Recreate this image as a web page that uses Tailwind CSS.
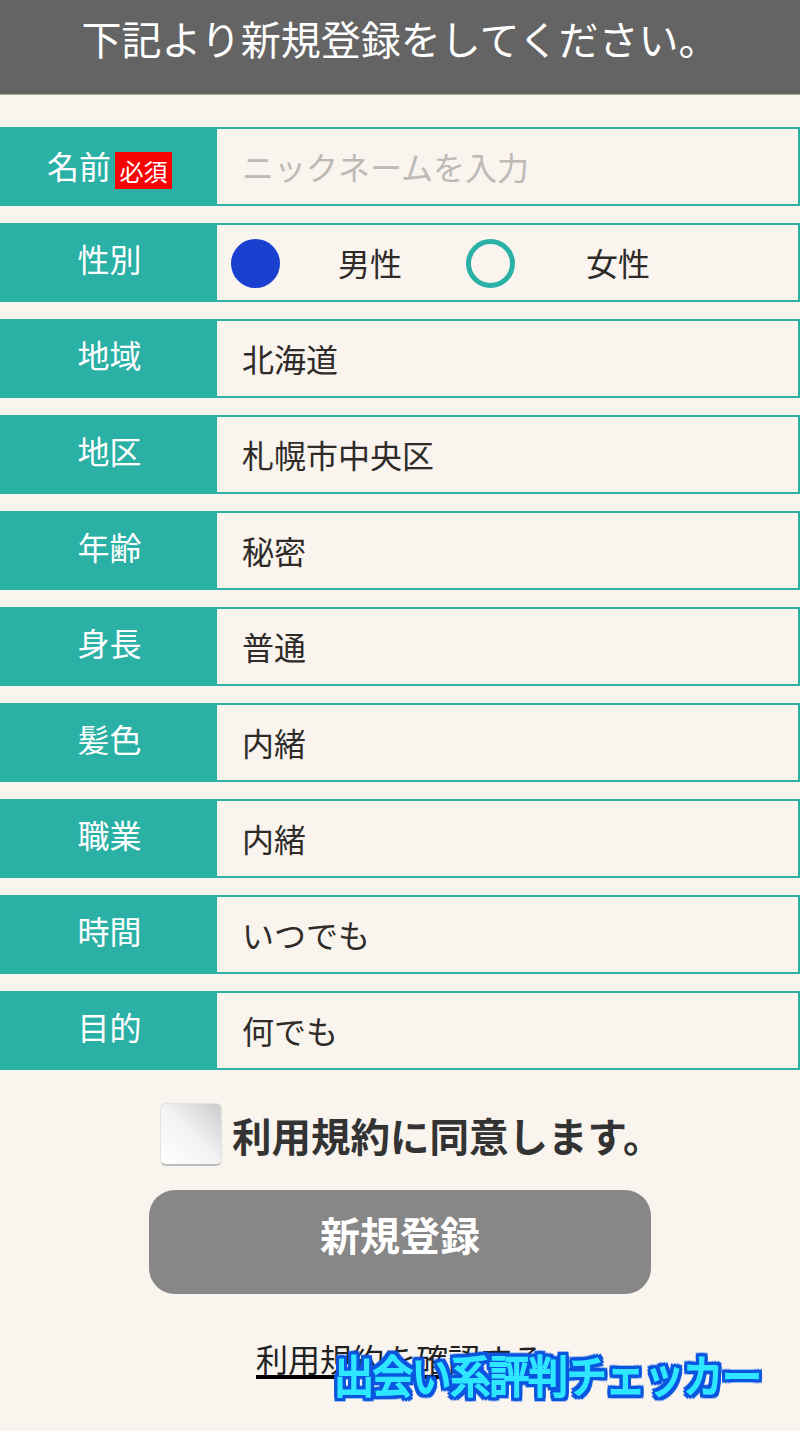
<!DOCTYPE html>
<html lang="ja"><head><meta charset="utf-8"><script src="https://cdn.jsdelivr.net/npm/@tailwindcss/browser@4"></script></head>
<body class="bg-[#f9f4ee] text-[#333]">
<div class="relative w-[800px] h-[1431px] overflow-hidden [font-family:'Noto_Sans_CJK_JP',sans-serif]">
<header class="h-[95px] bg-[#646464] border-b border-[#a9a598] text-white text-[40px] leading-[76px] text-center font-normal">下記より新規登録をしてください。</header>
<form class="mt-[32px] flex flex-col gap-[17px]">
<div class="flex h-[79px]"><div class="w-[217px] bg-[#2bb0a6] text-white text-[32px] flex items-center justify-center pb-[4px] pl-[2px]"><span class="leading-none font-normal">名前</span><span class="ml-[4px] mt-[11px] w-[57px] h-[37px] bg-[#f70303] text-[24px] leading-[37px] text-center font-normal">必須</span></div><div class="flex-1 border-2 border-l-0 border-[#2bb0a6] flex items-center pl-[25px] pb-[2px] text-[32px] text-[#bdbab6] font-normal">ニックネームを入力</div></div>
<div class="flex h-[79px]"><div class="w-[217px] bg-[#2bb0a6] text-white text-[32px] font-normal flex items-center justify-center pb-[10px] pl-[2px]">性別</div><div class="flex-1 border-2 border-l-0 border-[#2bb0a6] flex items-center pl-[14px] text-[32px] font-normal text-[#2f2b28]"><span class="w-[49px] h-[49px] mt-[1px] rounded-full bg-[#1a40d0]"></span><span class="ml-[58px] w-[64px] -mt-[2px]">男性</span><span class="ml-[64px] mt-[1px] w-[49px] h-[49px] rounded-full border-[5px] border-[#2bb0a6]"></span><span class="ml-[71px] -mt-[2px]">女性</span></div></div>
<div class="flex h-[79px]"><div class="w-[217px] bg-[#2bb0a6] text-white text-[32px] font-normal flex items-center justify-center pb-[10px] pl-[2px]">地域</div><div class="flex-1 border-2 border-l-0 border-[#2bb0a6] flex items-center pl-[25px] pb-[2px] text-[32px] font-normal text-[#2f2b28]">北海道</div></div>
<div class="flex h-[79px]"><div class="w-[217px] bg-[#2bb0a6] text-white text-[32px] font-normal flex items-center justify-center pb-[10px] pl-[2px]">地区</div><div class="flex-1 border-2 border-l-0 border-[#2bb0a6] flex items-center pl-[25px] pb-[2px] text-[32px] font-normal text-[#2f2b28]">札幌市中央区</div></div>
<div class="flex h-[79px]"><div class="w-[217px] bg-[#2bb0a6] text-white text-[32px] font-normal flex items-center justify-center pb-[10px] pl-[2px]">年齢</div><div class="flex-1 border-2 border-l-0 border-[#2bb0a6] flex items-center pl-[25px] pb-[2px] text-[32px] font-normal text-[#2f2b28]">秘密</div></div>
<div class="flex h-[79px]"><div class="w-[217px] bg-[#2bb0a6] text-white text-[32px] font-normal flex items-center justify-center pb-[10px] pl-[2px]">身長</div><div class="flex-1 border-2 border-l-0 border-[#2bb0a6] flex items-center pl-[25px] pb-[2px] text-[32px] font-normal text-[#2f2b28]">普通</div></div>
<div class="flex h-[79px]"><div class="w-[217px] bg-[#2bb0a6] text-white text-[32px] font-normal flex items-center justify-center pb-[10px] pl-[2px]">髪色</div><div class="flex-1 border-2 border-l-0 border-[#2bb0a6] flex items-center pl-[25px] pb-[2px] text-[32px] font-normal text-[#2f2b28]">内緒</div></div>
<div class="flex h-[79px]"><div class="w-[217px] bg-[#2bb0a6] text-white text-[32px] font-normal flex items-center justify-center pb-[10px] pl-[2px]">職業</div><div class="flex-1 border-2 border-l-0 border-[#2bb0a6] flex items-center pl-[25px] pb-[2px] text-[32px] font-normal text-[#2f2b28]">内緒</div></div>
<div class="flex h-[79px]"><div class="w-[217px] bg-[#2bb0a6] text-white text-[32px] font-normal flex items-center justify-center pb-[10px] pl-[2px]">時間</div><div class="flex-1 border-2 border-l-0 border-[#2bb0a6] flex items-center pl-[25px] pb-[2px] text-[32px] font-normal text-[#2f2b28]">いつでも</div></div>
<div class="flex h-[79px]"><div class="w-[217px] bg-[#2bb0a6] text-white text-[32px] font-normal flex items-center justify-center pb-[10px] pl-[2px]">目的</div><div class="flex-1 border-2 border-l-0 border-[#2bb0a6] flex items-center pl-[25px] pb-[2px] text-[32px] font-normal text-[#2f2b28]">何でも</div></div>
</form>
<div class="mt-[33px] ml-[160px] flex items-center h-[63px]"><span class="w-[62px] h-[63px] rounded-[6px] border border-b-2 border-[#e4e2df] border-b-[#bdbdbd] bg-gradient-to-bl from-[#cbcbcb] via-[#f3f3f3] to-white"></span><span class="ml-[10px] text-[39.5px] font-bold text-[#333] leading-none">利用規約に同意します。</span></div>
<button type="button" class="block mx-auto mt-[24px] w-[502px] h-[104px] rounded-[26px] bg-[#878787] text-white text-[40px] font-bold pb-[17px]">新規登録</button>
<div class="mt-[42px] ml-[256px] w-[282px] text-[32px] leading-[44px] h-[39px] border-b-4 box-content border-black text-[#222] font-normal whitespace-nowrap">利用規約を確認する</div>
<div class="absolute left-[334px] top-[1344px] text-[40px] leading-[60px] font-normal whitespace-nowrap text-[#2ee6ff] tracking-[-1.2px] [transform:scaleY(1.12)] [-webkit-text-stroke:2px_#2ee6ff] [filter:drop-shadow(3px_0_0_#0a55e0)_drop-shadow(-3px_0_0_#0a55e0)_drop-shadow(0_3px_0_#0a55e0)_drop-shadow(0_-3px_0_#0a55e0)]">出会い系評判チェッカー</div>
</div>
</body></html>
